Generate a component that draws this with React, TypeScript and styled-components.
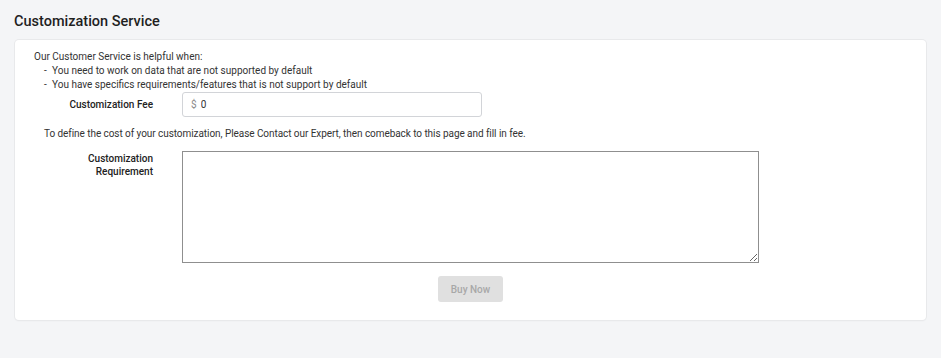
import styled, { createGlobalStyle } from "styled-components";

const GlobalStyle = createGlobalStyle`
  body {
    margin: 0;
    background-color: #f4f5f7;
    font-family: Roboto, "Liberation Sans", sans-serif;
    color: #333;
  }
`;

const Page = styled.div`
  padding: 12px 15px 20px 15px;
`;

const Title = styled.h2`
  margin: 0 0 8px -1px;
  font-size: 14.5px;
  font-weight: 500;
  line-height: 20px;
  color: #1f1f1f;
`;

const Card = styled.div`
  background: #fff;
  border-radius: 4px;
  box-shadow: 0 0 0 1px #e8e9eb, 0 1px 2px rgba(0, 0, 0, 0.06);
  padding: 10px 19px 18px 19px;
  font-size: 10px;
  line-height: 14px;
`;

const Intro = styled.p`
  margin: 0;
`;

const Bullets = styled.ul`
  margin: 0;
  padding: 0 0 0 10px;
  list-style: none;

  li::before {
    content: "-";
    display: inline-block;
    width: 8px;
  }
`;

const FormRow = styled.div<{ $top?: boolean }>`
  display: flex;
  align-items: ${(p) => (p.$top ? "flex-start" : "center")};
  gap: 29px;
`;

const Label = styled.label<{ $multi?: boolean }>`
  width: 119px;
  text-align: right;
  font-weight: 500;
  color: #222;
  line-height: 13px;
  padding-top: ${(p) => (p.$multi ? "1px" : "0")};
`;

const InputBox = styled.div`
  display: flex;
  align-items: center;
  width: 300px;
  height: 25px;
  box-sizing: border-box;
  border: 1px solid #d2d4d8;
  border-radius: 3px;
  padding: 0 8px;
  gap: 4px;

  span {
    color: #8a8a8a;
  }

  input {
    border: none;
    outline: none;
    flex: 1;
    font: inherit;
    color: #333;
    padding: 0;
  }
`;

const Note = styled.p`
  margin: 10px 0 10px 10px;
  letter-spacing: -0.06px;
`;

const Field = styled.div`
  display: flex;
  flex-direction: column;
  align-items: center;
  gap: 13px;
`;

const TextArea = styled.textarea`
  width: 577px;
  height: 112px;
  box-sizing: border-box;
  border: 1px solid #8f8f8f;
  border-radius: 0;
  font: inherit;
  padding: 4px;
  margin: 0;
  display: block;
`;

const BuyButton = styled.button`
  width: 65px;
  height: 26px;
  border: none;
  border-radius: 3px;
  background: #e0e0e0;
  color: #a8a8a8;
  font-family: inherit;
  font-size: 10px;
  font-weight: 500;
  cursor: not-allowed;
`;

export default function App() {
  return (
    <>
      <GlobalStyle />
      <Page>
        <Title>Customization Service</Title>
        <Card>
          <Intro>Our Customer Service is helpful when:</Intro>
          <Bullets>
            <li>You need to work on data that are not supported by default</li>
            <li>You have specifics requirements/features that is not support by default</li>
          </Bullets>
          <FormRow>
            <Label>Customization Fee</Label>
            <InputBox>
              <span>$</span>
              <input defaultValue="0" />
            </InputBox>
          </FormRow>
          <Note>
            To define the cost of your customization, Please Contact our Expert, then comeback to
            this page and fill in fee.
          </Note>
          <FormRow $top>
            <Label $multi>
              Customization
              <br />
              Requirement
            </Label>
            <Field>
              <TextArea />
              <BuyButton disabled>Buy Now</BuyButton>
            </Field>
          </FormRow>
        </Card>
      </Page>
    </>
  );
}
